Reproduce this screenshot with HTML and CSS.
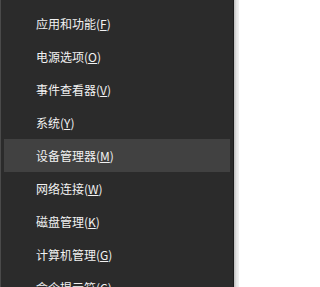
FILE: index.html
```html
<!DOCTYPE html>
<html lang="zh-CN">
<head>
<meta charset="utf-8">
<link rel="stylesheet" href="styles.css">
</head>
<body>
<div class="screen">
  <ul class="menu">
    <li class="item">应用和功能(<u>F</u>)</li>
    <li class="item">电源选项(<u>O</u>)</li>
    <li class="item">事件查看器(<u>V</u>)</li>
    <li class="item">系统(<u>Y</u>)</li>
    <li class="item item-hover">设备管理器(<u>M</u>)</li>
    <li class="item">网络连接(<u>W</u>)</li>
    <li class="item">磁盘管理(<u>K</u>)</li>
    <li class="item">计算机管理(<u>G</u>)</li>
    <li class="item">命令提示符(<u>C</u>)</li>
  </ul>
  <div class="desk"></div>
</div>
</body>
</html>
```
FILE: styles.css
```css
html, body {
  margin: 0;
  padding: 0;
  overflow: hidden;
}
body {
  width: 239px;
  height: 287px;
  font-family: "Noto Sans CJK SC", "Noto Sans", sans-serif;
}
.screen {
  display: flex;
  height: 287px;
}
.menu {
  list-style: none;
  margin: 0;
  box-sizing: border-box;
  width: 234px;
  height: 287px;
  padding: 7px 3px 0 3px;
  background: #2b2b2b;
  border-left: 1px solid #4a4a4a;
  border-right: 1px solid #1c1c1c;
  overflow: hidden;
}
.item {
  display: flex;
  align-items: center;
  height: 33px;
  padding-left: 32px;
  font-size: 12px;
  line-height: 16px;
  color: #f2f2f2;
  white-space: nowrap;
}
.item u {
  text-decoration-thickness: 1px;
  text-underline-offset: 1px;
}
.item-hover {
  background: #414141;
}
.desk {
  flex: 1;
  background: linear-gradient(to right, #bdbdbd, #e4e4e4 50%, #f2f2f2);
}
```
